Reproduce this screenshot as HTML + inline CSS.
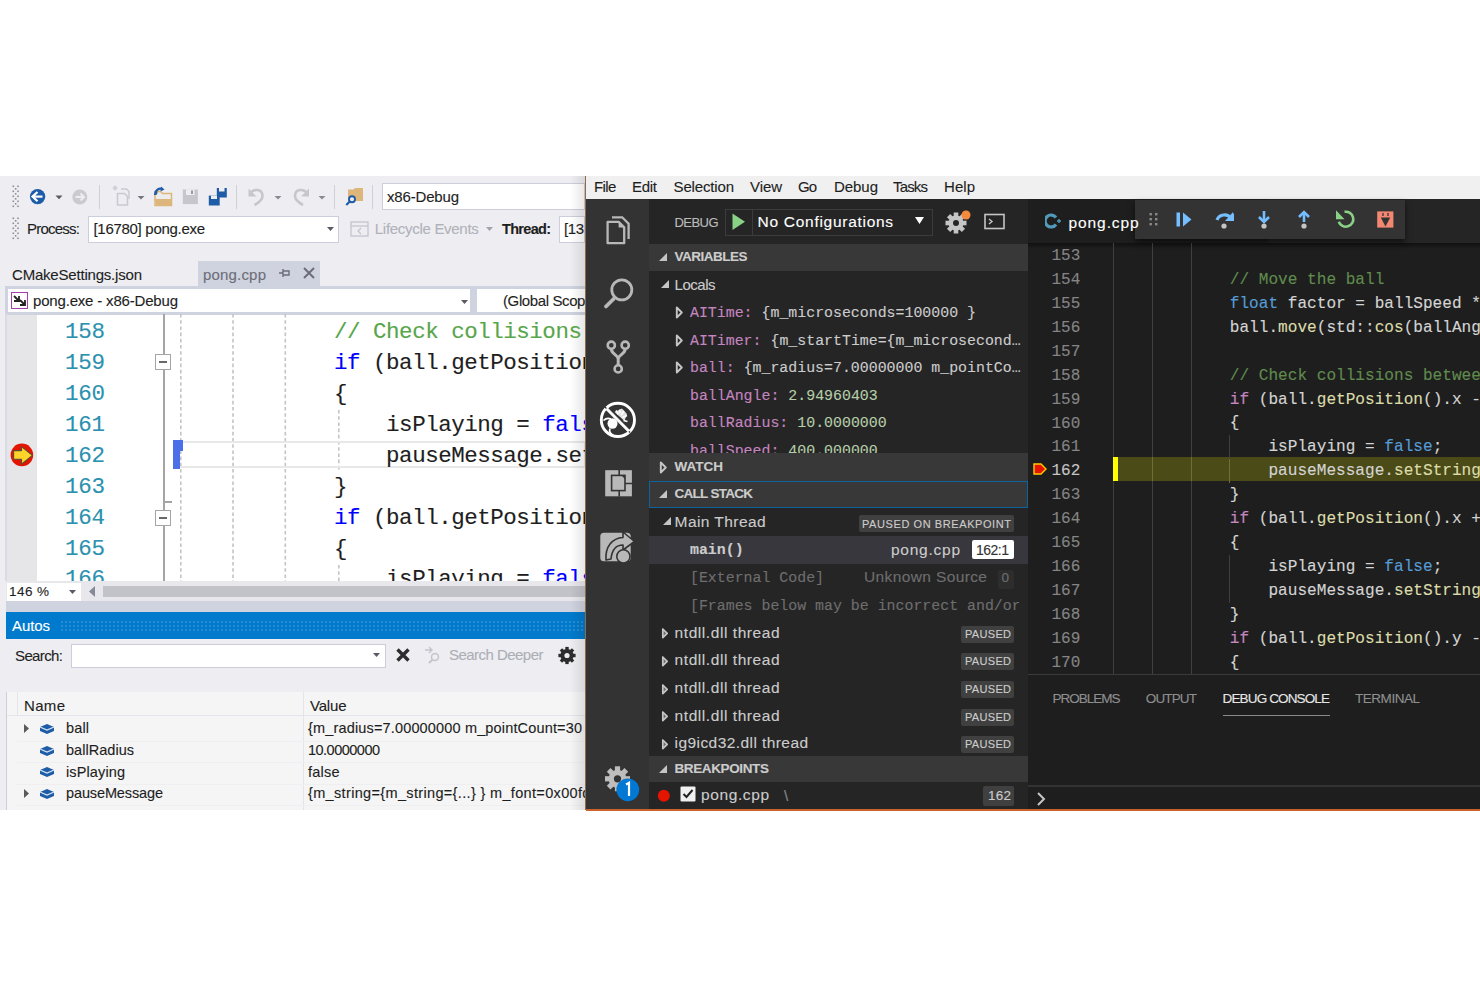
<!DOCTYPE html><html><head><meta charset="utf-8"><style>
html,body{margin:0;padding:0;}body{width:1480px;height:987px;position:relative;overflow:hidden;background:#fff;}
.t{position:absolute;white-space:pre;-webkit-text-stroke:0.12px currentColor;}

</style></head><body>
<div style="position:absolute;left:0px;top:176px;width:586px;height:634px;background:#eeeef2;"></div>
<svg style="position:absolute;left:0px;top:0px;overflow:visible" width="1" height="1"><g fill="#8e8e98"><rect x="12.5" y="185.5" width="1.6" height="1.6"/><rect x="17.2" y="185.5" width="1.6" height="1.6"/><rect x="14.85" y="188.0" width="1.6" height="1.6"/><rect x="12.5" y="190.5" width="1.6" height="1.6"/><rect x="17.2" y="190.5" width="1.6" height="1.6"/><rect x="14.85" y="193.0" width="1.6" height="1.6"/><rect x="12.5" y="195.5" width="1.6" height="1.6"/><rect x="17.2" y="195.5" width="1.6" height="1.6"/><rect x="14.85" y="198.0" width="1.6" height="1.6"/><rect x="12.5" y="200.5" width="1.6" height="1.6"/><rect x="17.2" y="200.5" width="1.6" height="1.6"/><rect x="14.85" y="203.0" width="1.6" height="1.6"/><rect x="12.5" y="205.5" width="1.6" height="1.6"/><rect x="17.2" y="205.5" width="1.6" height="1.6"/></g></svg>
<svg style="position:absolute;left:0px;top:0px;overflow:visible" width="1" height="1"><g fill="#8e8e98"><rect x="12.5" y="217.5" width="1.6" height="1.6"/><rect x="17.2" y="217.5" width="1.6" height="1.6"/><rect x="14.85" y="220.0" width="1.6" height="1.6"/><rect x="12.5" y="222.5" width="1.6" height="1.6"/><rect x="17.2" y="222.5" width="1.6" height="1.6"/><rect x="14.85" y="225.0" width="1.6" height="1.6"/><rect x="12.5" y="227.5" width="1.6" height="1.6"/><rect x="17.2" y="227.5" width="1.6" height="1.6"/><rect x="14.85" y="230.0" width="1.6" height="1.6"/><rect x="12.5" y="232.5" width="1.6" height="1.6"/><rect x="17.2" y="232.5" width="1.6" height="1.6"/><rect x="14.85" y="235.0" width="1.6" height="1.6"/><rect x="12.5" y="237.5" width="1.6" height="1.6"/><rect x="17.2" y="237.5" width="1.6" height="1.6"/></g></svg>
<svg style="position:absolute;left:20px;top:180px" width="80" height="34" viewBox="20 180 80 34"><circle cx="37.6" cy="196.6" r="7.7" fill="#1f5ca8"/><path d="M33 196.6H42.5" stroke="#fff" stroke-width="2.2"/><path d="M37.5 192L32.5 196.6L37.5 201.2" stroke="#fff" stroke-width="2.2" fill="none"/><path d="M55.5 195.5H62.5L59 199.2Z" fill="#5a5a62"/><circle cx="79.8" cy="197" r="7.5" fill="#cacacf"/><path d="M75.5 197H84M80.5 193.5L84 197L80.5 200.5" stroke="#eeeef2" stroke-width="2" fill="none"/></svg>
<div style="position:absolute;left:99px;top:185px;width:1px;height:24px;background:#cfcfd8;"></div>
<svg style="position:absolute;left:100px;top:180px" width="140" height="34" viewBox="100 180 140 34"><path d="M117.5 193.5H124.5L127.5 196.5V205H117.5Z" fill="none" stroke="#c9c9d1" stroke-width="1.6"/><path d="M121 189H126.5L129 191.5V199" fill="none" stroke="#c9c9d1" stroke-width="1.4"/><path d="M113.5 186.5L116.5 189.5M116.5 186.5L113.5 189.5M115 185.5V190.5M112.5 188H117.5" stroke="#cfcfd6" stroke-width="1.1"/><path d="M137.5 196H144.5L141 199.5Z" fill="#76767e"/><path d="M155 191.5H160.5L162.5 193.5H171.5V205.5H155Z" fill="#ececec" stroke="#dcb67a" stroke-width="1.5"/><path d="M154.5 199H171.8V205.5H156.5Z" fill="#dcb67a"/><path d="M155.5 195C155 190 159 187.5 162.5 189" fill="none" stroke="#1f5ca8" stroke-width="2.2"/><path d="M161 186.5L164.5 189.5L160.5 191.5Z" fill="#1f5ca8"/><path d="M155 190.5L158 193L154 195.5Z" fill="#1f5ca8"/><path d="M182.8 189.5H197.9V204.1H182.8Z" fill="#c6c6cc"/><path d="M186 189.5H194.5V195H186Z" fill="#eeeef2"/><rect x="191" y="190.5" width="2" height="3.5" fill="#9a9aa2"/><path d="M216.8 188H226.8V197.5H216.8Z" fill="#1f5ca8"/><path d="M219 188H224.5V191.5H219Z" fill="#eeeef2"/><path d="M208.8 195.6H219.7V205.5H208.8Z" fill="#1f5ca8"/><path d="M211 195.6H217V199H211Z" fill="#eeeef2"/></svg>
<div style="position:absolute;left:236px;top:185px;width:1px;height:24px;background:#cfcfd8;"></div>
<svg style="position:absolute;left:240px;top:180px" width="140" height="34" viewBox="240 180 140 34"><path d="M250 193.5C254 188 262.5 189 262.5 196C262.5 199.5 259 202.5 254.5 205" fill="none" stroke="#c6c6cc" stroke-width="2.6"/><path d="M248.5 188.5V196.5H256.5Z" fill="#c6c6cc"/><path d="M274.5 196H281.5L278 199.5Z" fill="#8a8a92"/><path d="M307.5 193.5C303.5 188 295 189 295 196C295 199.5 298.5 202.5 303 205" fill="none" stroke="#c6c6cc" stroke-width="2.6"/><path d="M309 188.5V196.5H301Z" fill="#c6c6cc"/><path d="M318.5 196H325.5L322 199.5Z" fill="#8a8a92"/><path d="M348 189.5H353.5L355 188H363V201H348Z" fill="#dcb67a"/><circle cx="352" cy="199.2" r="3" fill="#eeeef2" stroke="#1f5ca8" stroke-width="1.9"/><path d="M349.8 201.5L346.3 205" stroke="#1f5ca8" stroke-width="2.2"/></svg>
<div style="position:absolute;left:334px;top:185px;width:1px;height:24px;background:#cfcfd8;"></div>
<div style="position:absolute;left:372px;top:185px;width:1px;height:24px;background:#cfcfd8;"></div>
<div style="position:absolute;left:382px;top:183px;width:203px;height:27px;background:#ffffff;box-shadow:inset 0 0 0 1px #cccedb;"></div>
<div style="position:absolute;left:88px;top:216px;width:251px;height:27px;background:#ffffff;box-shadow:inset 0 0 0 1px #cccedb;"></div>
<svg style="position:absolute;left:327px;top:227px" width="8" height="5"><path d="M0 0h7l-3.5 4z" fill="#5a5a66"/></svg>
<svg style="position:absolute;left:350px;top:220px" width="20" height="18"><rect x="1" y="2" width="17" height="14" fill="none" stroke="#c4c4cc" stroke-width="1.3"/><path d="M1 6h17" stroke="#c4c4cc" stroke-width="1.3"/><path d="M11 8l-3 3 3 3" stroke="#c4c4cc" stroke-width="1.3" fill="none"/></svg>
<svg style="position:absolute;left:486px;top:227px" width="8" height="5"><path d="M0 0h7l-3.5 4z" fill="#a2a4ad"/></svg>
<div style="position:absolute;left:559px;top:216px;width:26px;height:27px;background:#ffffff;box-shadow:inset 0 0 0 1px #cccedb;"></div>
<div style="position:absolute;left:198px;top:261px;width:92px;height:25px;background:#cfd3df;"></div>
<div style="position:absolute;left:290px;top:261px;width:30px;height:25px;background:#cfd3df;"></div>
<svg style="position:absolute;left:278px;top:267px" width="14" height="12"><path d="M1 6h4M5 2v8M5 4h6v4H5" fill="none" stroke="#6d6d78" stroke-width="1.4"/></svg>
<svg style="position:absolute;left:302px;top:266px" width="14" height="14"><path d="M2 2l10 10M12 2L2 12" stroke="#6d6d78" stroke-width="2"/></svg>
<div style="position:absolute;left:5px;top:285.5px;width:581px;height:30px;background:#cfd3df;"></div>
<div style="position:absolute;left:5px;top:314px;width:1.6px;height:267px;background:#d9dce6;"></div>
<div style="position:absolute;left:7.5px;top:288.6px;width:462.4px;height:23.8px;background:#ffffff;"></div>
<div style="position:absolute;left:476.5px;top:288.6px;width:110px;height:23.8px;background:#ffffff;"></div>
<svg style="position:absolute;left:11px;top:292px" width="18" height="18"><rect x="0.5" y="0.5" width="16" height="16" fill="#fff" stroke="#a43fb1" stroke-width="1"/><path d="M3 4l5 5M8 4v5H3M9 8l5 5M14 8v5H9" stroke="#222" stroke-width="1.8" fill="none"/></svg>
<svg style="position:absolute;left:460.5px;top:299.5px" width="8" height="5"><path d="M0 0h7l-3.5 4z" fill="#5a5a66"/></svg>
<div style="position:absolute;left:7px;top:315px;width:579px;height:266px;background:#ffffff;"></div>
<div style="position:absolute;left:7px;top:315px;width:30px;height:266px;background:#e6e6e8;"></div>
<div style="position:absolute;left:162.8px;top:314px;width:2px;height:267px;background:#a5a5a5;"></div>
<svg style="position:absolute;left:155px;top:354px" width="17" height="17"><rect x="0.5" y="0.5" width="15" height="15" fill="#fff" stroke="#a5a5a5"/><path d="M4 8h8" stroke="#444" stroke-width="1.6"/></svg>
<svg style="position:absolute;left:155px;top:510px" width="17" height="17"><rect x="0.5" y="0.5" width="15" height="15" fill="#fff" stroke="#a5a5a5"/><path d="M4 8h8" stroke="#444" stroke-width="1.6"/></svg>
<div style="position:absolute;left:164px;top:501px;width:8px;height:1.5px;background:#a5a5a5;"></div>
<svg style="position:absolute;left:0;top:0;overflow:visible" width="1" height="1"><path d="M180.8 314V581" stroke="#c4c4c4" stroke-width="1.6" stroke-dasharray="3.6 2.6"/><path d="M233 314V581" stroke="#c4c4c4" stroke-width="1.6" stroke-dasharray="3.6 2.6"/><path d="M285.3 314V581" stroke="#c4c4c4" stroke-width="1.6" stroke-dasharray="3.6 2.6"/><path d="M338.8 410V470M338.8 565V581" stroke="#c4c4c4" stroke-width="1.6" stroke-dasharray="3.6 2.6"/></svg>
<div style="position:absolute;left:178px;top:441px;width:408px;height:27px;background:transparent;box-shadow:inset 0 0 0 2px #e8e8e8;"></div>
<div style="position:absolute;left:173px;top:440px;width:6.5px;height:28.5px;background:#4a6fe8;"></div>
<div style="position:absolute;left:173px;top:440px;width:9.5px;height:11px;background:#4a6fe8;"></div>
<svg style="position:absolute;left:0;top:0;overflow:visible" width="1" height="1"><circle cx="21.9" cy="454.9" r="11.3" fill="#e51400"/><path d="M13.6 450.6H21.5V446.6L32.4 455.4L21.5 464.2V459.2H13.6Z" fill="#ffd42a" stroke="#5a4a3a" stroke-width="1.1" stroke-linejoin="round"/></svg>
<div style="position:absolute;left:6px;top:581px;width:580px;height:20px;background:#e8e8ec;"></div>
<div style="position:absolute;left:7px;top:583px;width:74px;height:18px;background:#ffffff;"></div>
<svg style="position:absolute;left:69px;top:590px" width="8" height="5"><path d="M0 0h7l-3.5 4z" fill="#5a5a66"/></svg>
<svg style="position:absolute;left:89px;top:586px" width="8" height="12"><path d="M6 0v11L0 5.5z" fill="#868999"/></svg>
<div style="position:absolute;left:103px;top:586px;width:483px;height:11px;background:#c2c3c9;"></div>
<div style="position:absolute;left:6px;top:601px;width:580px;height:11px;background:#cfd3df;"></div>
<div style="position:absolute;left:6px;top:612px;width:580px;height:27px;background:#007acc;"></div>
<div style="position:absolute;left:60px;top:620px;width:526px;height:11px;background-image:radial-gradient(circle,#2b8ad2 0.9px,transparent 1.1px);background-size:4px 4px;"></div>
<div style="position:absolute;left:6px;top:639px;width:580px;height:171px;background:#eeeef2;"></div>
<div style="position:absolute;left:71px;top:644px;width:315px;height:24px;background:#ffffff;box-shadow:inset 0 0 0 1px #cccedb;"></div>
<svg style="position:absolute;left:373px;top:653px" width="8" height="5"><path d="M0 0h7l-3.5 4z" fill="#5a5a66"/></svg>
<svg style="position:absolute;left:395px;top:647px" width="17" height="17"><path d="M2.5 2.5l11 11M13.5 2.5l-11 11" stroke="#2d2d30" stroke-width="3.4"/></svg>
<svg style="position:absolute;left:423px;top:645px" width="18" height="20"><path d="M2 5h7M6 2l3 3-3 3" stroke="#c4c4cc" stroke-width="1.4" fill="none"/><circle cx="12" cy="12" r="3.5" fill="none" stroke="#c4c4cc" stroke-width="1.5"/><path d="M9.5 14.5L6 18" stroke="#c4c4cc" stroke-width="1.8"/></svg>
<svg style="position:absolute;left:557px;top:646px" width="20" height="20"><g transform="translate(10 9.5)"><circle r="6.6" fill="#2d2d30"/><rect x="-1.7" y="-8.6" width="3.4" height="4" fill="#2d2d30" transform="rotate(0)"/><rect x="-1.7" y="-8.6" width="3.4" height="4" fill="#2d2d30" transform="rotate(45)"/><rect x="-1.7" y="-8.6" width="3.4" height="4" fill="#2d2d30" transform="rotate(90)"/><rect x="-1.7" y="-8.6" width="3.4" height="4" fill="#2d2d30" transform="rotate(135)"/><rect x="-1.7" y="-8.6" width="3.4" height="4" fill="#2d2d30" transform="rotate(180)"/><rect x="-1.7" y="-8.6" width="3.4" height="4" fill="#2d2d30" transform="rotate(225)"/><rect x="-1.7" y="-8.6" width="3.4" height="4" fill="#2d2d30" transform="rotate(270)"/><rect x="-1.7" y="-8.6" width="3.4" height="4" fill="#2d2d30" transform="rotate(315)"/><circle r="2.6" fill="#eeeef2"/></g></svg>
<div style="position:absolute;left:6px;top:692px;width:580px;height:118px;background:#f5f5f5;"></div>
<div style="position:absolute;left:6px;top:692px;width:580px;height:24px;background:#f5f5f5;border-bottom:1.5px solid #e4e4ea;box-sizing:border-box;"></div>
<div style="position:absolute;left:6px;top:692px;width:1px;height:118px;background:#cccedb;"></div>
<div style="position:absolute;left:17px;top:692px;width:1px;height:24px;background:#e4e4ea;"></div>
<div style="position:absolute;left:303px;top:692px;width:1px;height:118px;background:#e4e4ea;"></div>
<div style="position:absolute;left:17px;top:740.7px;width:569px;height:1px;background:#efeff2;"></div>
<svg style="position:absolute;left:23px;top:723.2px" width="8" height="12"><path d="M1 1v9l5-4.5z" fill="#5a5a5a"/></svg>
<svg style="position:absolute;left:39px;top:722.2px" width="16" height="14"><path d="M1 5l7-3 7 3v4l-7 3-7-3z" fill="#1f5ca8"/><path d="M1 5l7 3 7-3" stroke="#d8e6f5" stroke-width="1.2" fill="none"/></svg>
<div style="position:absolute;left:17px;top:762.3000000000001px;width:569px;height:1px;background:#efeff2;"></div>
<svg style="position:absolute;left:39px;top:743.8000000000001px" width="16" height="14"><path d="M1 5l7-3 7 3v4l-7 3-7-3z" fill="#1f5ca8"/><path d="M1 5l7 3 7-3" stroke="#d8e6f5" stroke-width="1.2" fill="none"/></svg>
<div style="position:absolute;left:17px;top:783.9000000000001px;width:569px;height:1px;background:#efeff2;"></div>
<svg style="position:absolute;left:39px;top:765.4000000000001px" width="16" height="14"><path d="M1 5l7-3 7 3v4l-7 3-7-3z" fill="#1f5ca8"/><path d="M1 5l7 3 7-3" stroke="#d8e6f5" stroke-width="1.2" fill="none"/></svg>
<svg style="position:absolute;left:23px;top:788.0px" width="8" height="12"><path d="M1 1v9l5-4.5z" fill="#5a5a5a"/></svg>
<svg style="position:absolute;left:39px;top:787.0px" width="16" height="14"><path d="M1 5l7-3 7 3v4l-7 3-7-3z" fill="#1f5ca8"/><path d="M1 5l7 3 7-3" stroke="#d8e6f5" stroke-width="1.2" fill="none"/></svg>
<div style="position:absolute;left:17px;top:805px;width:569px;height:1px;background:#efeff2;"></div>
<div style="position:absolute;left:570px;top:176px;width:16px;height:634px;background:linear-gradient(to right,rgba(0,0,0,0),rgba(0,0,0,0.10));"></div>
<div style="position:absolute;left:584.6px;top:176px;width:2px;height:634px;background:#8b6d4c;"></div>
<div style="position:absolute;left:586px;top:176px;width:894px;height:634px;background:#1e1e1e;"></div>
<div style="position:absolute;left:586px;top:176px;width:894px;height:23px;background:#f0f0f0;"></div>
<div style="position:absolute;left:586px;top:199px;width:63px;height:611px;background:#333333;"></div>
<svg style="position:absolute;left:586px;top:199px" width="63" height="400" viewBox="586 199 63 400"><path d="M607.6 221.8H618.6L624.2 227.4V243.2H607.6Z" fill="none" stroke="#b8b8b8" stroke-width="2.3" stroke-linejoin="round"/><path d="M618.6 221.8V227.4H624.2Z" fill="#b8b8b8"/><path d="M612 217.3H622.2L628.6 223.7V239" fill="none" stroke="#b8b8b8" stroke-width="2.3"/><circle cx="621.8" cy="289.9" r="10" fill="none" stroke="#b8b8b8" stroke-width="2.8"/><path d="M606 306.5L613.5 299" stroke="#b8b8b8" stroke-width="3.8" stroke-linecap="round"/><circle cx="611.3" cy="345.2" r="3.6" fill="none" stroke="#b8b8b8" stroke-width="2.6"/><circle cx="625.2" cy="345.2" r="3.6" fill="none" stroke="#b8b8b8" stroke-width="2.6"/><circle cx="618.2" cy="368.9" r="3.6" fill="none" stroke="#b8b8b8" stroke-width="2.6"/><path d="M611.3 349C611.3 354 618.2 355 618.2 359V365.2M625.2 349C625.2 354 618.2 355 618.2 359" fill="none" stroke="#b8b8b8" stroke-width="3"/><circle cx="617.9" cy="419.9" r="16.6" fill="none" stroke="#ffffff" stroke-width="2.9"/><path d="M606 408L629.5 431.8" stroke="#ffffff" stroke-width="2.8"/><ellipse cx="612.5" cy="423.5" rx="5" ry="5.2" fill="#ffffff"/><path d="M603.5 420.5C606 418 609 418 611 419M610 428.5C609 431 610 433 612 434.5M620 409.5V413M616 410.5L618.5 414.5M624 411L621 415M627 415.5L622.5 417.5M627.5 421.5L623.5 420.5" stroke="#ffffff" stroke-width="1.7" fill="none"/><path d="M614.5 412L622 408.5L627 414L624.5 421Z" fill="#ffffff" opacity="0.85"/><path d="M605 407L630 432.5" stroke="#333333" stroke-width="1.2"/><path d="M606.4 408.4L629 431.2" stroke="#ffffff" stroke-width="2.2"/><rect x="605.2" y="470.2" width="26.7" height="26.1" fill="#b8b8b8"/><path d="M619.2 470V496.5M619.2 483.5H632" stroke="#333333" stroke-width="1.6"/><rect x="611.6" y="475.4" width="13.4" height="15.2" fill="#b8b8b8" stroke="#333333" stroke-width="1.6"/><path d="M621.5 475.4H625V479Z" fill="#333333"/><rect x="600.3" y="532.7" width="30.4" height="28.6" rx="3.5" fill="#b8b8b8"/><path d="M606 560C605 547 612 538 623 537.5V532L634.5 541.5L623 550V545C617 545 612 549 611 559Z" fill="#b8b8b8" stroke="#333333" stroke-width="1.6" stroke-linejoin="round"/><circle cx="623.4" cy="556.4" r="6.6" fill="#b8b8b8" stroke="#333333" stroke-width="1.6"/></svg>
<svg style="position:absolute;left:603px;top:764px" width="38" height="38"><g transform="translate(14.5 14.8)"><circle r="9" fill="#bdbdbd"/><rect x="-2.6" y="-12.5" width="5.2" height="6" fill="#bdbdbd" transform="rotate(0)"/><rect x="-2.6" y="-12.5" width="5.2" height="6" fill="#bdbdbd" transform="rotate(45)"/><rect x="-2.6" y="-12.5" width="5.2" height="6" fill="#bdbdbd" transform="rotate(90)"/><rect x="-2.6" y="-12.5" width="5.2" height="6" fill="#bdbdbd" transform="rotate(135)"/><rect x="-2.6" y="-12.5" width="5.2" height="6" fill="#bdbdbd" transform="rotate(180)"/><rect x="-2.6" y="-12.5" width="5.2" height="6" fill="#bdbdbd" transform="rotate(225)"/><rect x="-2.6" y="-12.5" width="5.2" height="6" fill="#bdbdbd" transform="rotate(270)"/><rect x="-2.6" y="-12.5" width="5.2" height="6" fill="#bdbdbd" transform="rotate(315)"/><circle r="3.6" fill="#333"/></g><circle cx="24.8" cy="25.8" r="11.4" fill="#0078d4"/><path d="M23 20.5l3-1.6v13" stroke="#fff" stroke-width="2.2" fill="none"/></svg>
<div style="position:absolute;left:649px;top:199px;width:379px;height:611px;background:#252526;"></div>
<div style="position:absolute;left:725px;top:208.5px;width:208px;height:27px;background:#252526;box-shadow:inset 0 0 0 1px #3c3c3c;"></div>
<div style="position:absolute;left:752px;top:209px;width:1px;height:26px;background:#3c3c3c;"></div>
<svg style="position:absolute;left:732px;top:213px" width="14" height="18"><path d="M0.5 0.5v16.5l12.5-8.25z" fill="#89d185"/></svg>
<svg style="position:absolute;left:914px;top:216px" width="12" height="10"><path d="M1 1h9l-4.5 7z" fill="#ffffff"/></svg>
<svg style="position:absolute;left:942px;top:208px" width="32" height="28"><g transform="translate(14 15)"><circle r="7.5" fill="#c5c5c5"/><rect x="-2.3" y="-10.5" width="4.6" height="5" fill="#c5c5c5" transform="rotate(0)"/><rect x="-2.3" y="-10.5" width="4.6" height="5" fill="#c5c5c5" transform="rotate(45)"/><rect x="-2.3" y="-10.5" width="4.6" height="5" fill="#c5c5c5" transform="rotate(90)"/><rect x="-2.3" y="-10.5" width="4.6" height="5" fill="#c5c5c5" transform="rotate(135)"/><rect x="-2.3" y="-10.5" width="4.6" height="5" fill="#c5c5c5" transform="rotate(180)"/><rect x="-2.3" y="-10.5" width="4.6" height="5" fill="#c5c5c5" transform="rotate(225)"/><rect x="-2.3" y="-10.5" width="4.6" height="5" fill="#c5c5c5" transform="rotate(270)"/><rect x="-2.3" y="-10.5" width="4.6" height="5" fill="#c5c5c5" transform="rotate(315)"/><circle r="3" fill="#252526"/></g><circle cx="24" cy="7" r="4.5" fill="#f48a3c"/></svg>
<svg style="position:absolute;left:984px;top:213px" width="22" height="18"><rect x="1" y="1.5" width="19" height="14" fill="none" stroke="#c5c5c5" stroke-width="1.6"/><path d="M5 6l3 2.5-3 2.5" fill="none" stroke="#c5c5c5" stroke-width="1.4"/></svg>
<div style="position:absolute;left:649px;top:243.5px;width:379px;height:27.5px;background:#383838;"></div>
<svg style="position:absolute;left:657px;top:252.25px" width="12" height="12"><path d="M10 1v8H2z" fill="#c5c5c5"/></svg>
<svg style="position:absolute;left:659px;top:279px" width="12" height="12"><path d="M10 1v8H2z" fill="#c5c5c5"/></svg>
<svg style="position:absolute;left:675px;top:306.0px" width="10" height="13"><path d="M1.8 1.5v10l5-5z" fill="none" stroke="#c5c5c5" stroke-width="1.9" stroke-linejoin="round"/></svg>
<svg style="position:absolute;left:675px;top:333.6px" width="10" height="13"><path d="M1.8 1.5v10l5-5z" fill="none" stroke="#c5c5c5" stroke-width="1.9" stroke-linejoin="round"/></svg>
<svg style="position:absolute;left:675px;top:361.2px" width="10" height="13"><path d="M1.8 1.5v10l5-5z" fill="none" stroke="#c5c5c5" stroke-width="1.9" stroke-linejoin="round"/></svg>
<div style="position:absolute;left:649px;top:453px;width:379px;height:27.5px;background:#383838;"></div>
<svg style="position:absolute;left:659px;top:460.75px" width="10" height="13"><path d="M1.8 1.5v10l5-5z" fill="none" stroke="#c5c5c5" stroke-width="1.9" stroke-linejoin="round"/></svg>
<div style="position:absolute;left:649px;top:480.5px;width:379px;height:27.5px;background:#383838;box-shadow:inset 0 0 0 1px #0e639c;"></div>
<svg style="position:absolute;left:657px;top:489.25px" width="12" height="12"><path d="M10 1v8H2z" fill="#c5c5c5"/></svg>
<svg style="position:absolute;left:661px;top:516px" width="12" height="12"><path d="M10 1v8H2z" fill="#c5c5c5"/></svg>
<div style="position:absolute;left:859px;top:515px;width:155px;height:16.5px;background:#404040;border-radius:2px;"></div>
<div style="position:absolute;left:649px;top:536px;width:379px;height:27.5px;background:#37373d;"></div>
<div style="position:absolute;left:972px;top:540px;width:42px;height:19px;background:#ffffff;border-radius:2px;"></div>
<div style="position:absolute;left:998px;top:570px;width:16px;height:19px;background:#2d2d2d;border-radius:2px;"></div>
<svg style="position:absolute;left:660.5px;top:627.3px" width="10" height="13"><path d="M1.8 2v8.6l4.4-4.3z" fill="#6a6a6a" stroke="#c5c5c5" stroke-width="1.7" stroke-linejoin="round"/></svg>
<div style="position:absolute;left:961px;top:625.8px;width:53px;height:17px;background:#404040;border-radius:2px;"></div>
<svg style="position:absolute;left:660.5px;top:654.9px" width="10" height="13"><path d="M1.8 2v8.6l4.4-4.3z" fill="#6a6a6a" stroke="#c5c5c5" stroke-width="1.7" stroke-linejoin="round"/></svg>
<div style="position:absolute;left:961px;top:653.4px;width:53px;height:17px;background:#404040;border-radius:2px;"></div>
<svg style="position:absolute;left:660.5px;top:682.5px" width="10" height="13"><path d="M1.8 2v8.6l4.4-4.3z" fill="#6a6a6a" stroke="#c5c5c5" stroke-width="1.7" stroke-linejoin="round"/></svg>
<div style="position:absolute;left:961px;top:681.0px;width:53px;height:17px;background:#404040;border-radius:2px;"></div>
<svg style="position:absolute;left:660.5px;top:710.0999999999999px" width="10" height="13"><path d="M1.8 2v8.6l4.4-4.3z" fill="#6a6a6a" stroke="#c5c5c5" stroke-width="1.7" stroke-linejoin="round"/></svg>
<div style="position:absolute;left:961px;top:708.5999999999999px;width:53px;height:17px;background:#404040;border-radius:2px;"></div>
<svg style="position:absolute;left:660.5px;top:737.6999999999999px" width="10" height="13"><path d="M1.8 2v8.6l4.4-4.3z" fill="#6a6a6a" stroke="#c5c5c5" stroke-width="1.7" stroke-linejoin="round"/></svg>
<div style="position:absolute;left:961px;top:736.1999999999999px;width:53px;height:17px;background:#404040;border-radius:2px;"></div>
<div style="position:absolute;left:649px;top:755.5px;width:379px;height:26px;background:#383838;"></div>
<svg style="position:absolute;left:657px;top:763.5px" width="12" height="12"><path d="M10 1v8H2z" fill="#c5c5c5"/></svg>
<svg style="position:absolute;left:657px;top:789px" width="14" height="14"><circle cx="6.8" cy="6.8" r="6" fill="#e51400"/></svg>
<svg style="position:absolute;left:680px;top:786px" width="17" height="17"><rect x="0.5" y="0.5" width="15" height="15" fill="#f0f0f0" rx="1"/><path d="M3.5 8l3 3 6-7" stroke="#222" stroke-width="2" fill="none"/></svg>
<div style="position:absolute;left:983px;top:786px;width:31px;height:19.5px;background:#404040;border-radius:2px;"></div>
<div style="position:absolute;left:1028px;top:199px;width:452px;height:44px;background:#252526;"></div>
<div style="position:absolute;left:1028px;top:199px;width:240px;height:44px;background:#1e1e1e;"></div>
<svg style="position:absolute;left:1045px;top:213px" width="18" height="16"><path d="M11 4.5A6 6 0 1 0 11 11.5" fill="none" stroke="#519aba" stroke-width="3.2"/><path d="M12 8h4M14 6v4" stroke="#519aba" stroke-width="1.4"/></svg>
<div style="position:absolute;left:1028px;top:243px;width:452px;height:431px;background:#1e1e1e;"></div>
<div style="position:absolute;left:1028px;top:243px;width:452px;height:6px;background:linear-gradient(rgba(0,0,0,0.45),rgba(0,0,0,0));"></div>
<div style="position:absolute;left:1113.0px;top:243px;width:1px;height:431px;background:#404040;"></div>
<div style="position:absolute;left:1152.3px;top:243px;width:1px;height:431px;background:#404040;"></div>
<div style="position:absolute;left:1191.2px;top:243px;width:1px;height:431px;background:#404040;"></div>
<div style="position:absolute;left:1113.5px;top:456.8px;width:367px;height:24.4px;background:#4b4b18;"></div>
<div style="position:absolute;left:1113px;top:456.8px;width:5px;height:24.4px;background:#ffff00;"></div>
<div style="position:absolute;left:1152.3px;top:456.8px;width:1px;height:24.4px;background:rgba(120,120,60,0.8);"></div>
<div style="position:absolute;left:1191.2px;top:456.8px;width:1px;height:24.4px;background:rgba(120,120,60,0.8);"></div>
<div style="position:absolute;left:1229.1px;top:456.8px;width:1px;height:24.4px;background:rgba(120,120,60,0.8);"></div>
<div style="position:absolute;left:1229.1px;top:435.32000000000005px;width:1px;height:23.94px;background:#404040;"></div>
<div style="position:absolute;left:1229.1px;top:459.26px;width:1px;height:23.94px;background:#6e6e3a;"></div>
<div style="position:absolute;left:1229.1px;top:555.02px;width:1px;height:23.94px;background:#404040;"></div>
<div style="position:absolute;left:1229.1px;top:578.96px;width:1px;height:23.94px;background:#404040;"></div>
<svg style="position:absolute;left:1033px;top:463px" width="14" height="12"><path d="M1 1h7l5 5-5 5H1z" fill="#e51400" stroke="#ffcc00" stroke-width="1.4"/></svg>
<div style="position:absolute;left:1135px;top:200px;width:270px;height:39px;background:#333333;box-shadow:0 3px 6px rgba(0,0,0,0.6);"></div>
<svg style="position:absolute;left:1148px;top:211px" width="12" height="16"><g fill="#8a8a8a"><rect x="1.5" y="2" width="2.4" height="2.4"/><rect x="1.5" y="7" width="2.4" height="2.4"/><rect x="1.5" y="12" width="2.4" height="2.4"/><rect x="7" y="2" width="2.4" height="2.4"/><rect x="7" y="7" width="2.4" height="2.4"/><rect x="7" y="12" width="2.4" height="2.4"/></g></svg>
<svg style="position:absolute;left:1174px;top:211px" width="20" height="18"><rect x="2.5" y="1.5" width="3.5" height="14" fill="#75beff"/><path d="M9 1.5v14l8.5-7z" fill="#75beff"/></svg>
<svg style="position:absolute;left:1213px;top:208px" width="24" height="22"><path d="M4 12c2-6 11-7 14-1" fill="none" stroke="#75beff" stroke-width="3.2"/><path d="M20 4v9h-8" fill="#75beff"/><path d="M13 13h8V5z" fill="#75beff"/><circle cx="11" cy="18" r="2.6" fill="#c5c5c5"/></svg>
<svg style="position:absolute;left:1254px;top:208px" width="20" height="22"><path d="M10 3v9" stroke="#75beff" stroke-width="2.6"/><path d="M5 9l5 5 5-5" fill="none" stroke="#75beff" stroke-width="2.6"/><circle cx="10" cy="18" r="2.6" fill="#c5c5c5"/></svg>
<svg style="position:absolute;left:1294px;top:208px" width="20" height="22"><path d="M10 4v10" stroke="#75beff" stroke-width="2.6"/><path d="M5 9l5-5 5 5" fill="none" stroke="#75beff" stroke-width="2.6"/><circle cx="10" cy="18" r="2.6" fill="#c5c5c5"/></svg>
<svg style="position:absolute;left:1325px;top:200px" width="80" height="40" viewBox="1325 200 80 40"><path d="M1344.5 211.8A7.5 7.5 0 1 1 1338.75 221.8" fill="none" stroke="#89d185" stroke-width="2.6"/><path d="M1336 210.3V219.2H1344.5Z" fill="#89d185"/><rect x="1377.2" y="211.4" width="16.2" height="16.2" fill="#f48771"/><path d="M1383 213v3M1388 213v3" stroke="#333" stroke-width="1.3"/><path d="M1380.8 217.5H1390.2L1385.5 226.5Z" fill="#333"/></svg>
<div style="position:absolute;left:1028px;top:674px;width:452px;height:136px;background:#1e1e1e;"></div>
<div style="position:absolute;left:1028px;top:674px;width:452px;height:1px;background:#3a3a3a;"></div>
<div style="position:absolute;left:1222.6px;top:714.5px;width:107.5px;height:1.5px;background:#8a8a8a;"></div>
<div style="position:absolute;left:1028px;top:785px;width:452px;height:1.5px;background:#333333;"></div>
<svg style="position:absolute;left:1036px;top:791px" width="12" height="16"><path d="M2 2l6 6-6 6" fill="none" stroke="#c5c5c5" stroke-width="2"/></svg>
<div style="position:absolute;left:586px;top:809px;width:894px;height:1.5px;background:#c8632e;"></div>
<div style="position:absolute;left:0;top:0;width:1480px;height:987px;clip-path:inset(176px 895px 177px 0px);">
<div class="t" id="t0" style="left:387px;top:187.80px;font-family:'Liberation Sans', sans-serif;font-size:15px;line-height:18.0px;color:#1e1e1e;letter-spacing:-0.174px;">x86-Debug</div>
<div class="t" id="t1" style="left:27px;top:220.30px;font-family:'Liberation Sans', sans-serif;font-size:15px;line-height:18.0px;color:#1e1e1e;letter-spacing:-0.766px;">Process:</div>
<div class="t" id="t2" style="left:93.5px;top:220.30px;font-family:'Liberation Sans', sans-serif;font-size:15px;line-height:18.0px;color:#1e1e1e;letter-spacing:-0.296px;">[16780] pong.exe</div>
<div class="t" id="t3" style="left:374.8px;top:220.30px;font-family:'Liberation Sans', sans-serif;font-size:15px;line-height:18.0px;color:#b0b2ba;letter-spacing:-0.293px;">Lifecycle Events</div>
<div class="t" id="t4" style="left:502px;top:220.77px;font-family:'Liberation Sans', sans-serif;font-size:14.5px;line-height:17.4px;color:#1e1e1e;font-weight:bold;letter-spacing:-0.695px;">Thread:</div>
<div class="t" id="t5" style="left:564px;top:220.30px;font-family:'Liberation Sans', sans-serif;font-size:15px;line-height:18.0px;color:#1e1e1e;letter-spacing:-0.430px;">[13</div>
<div class="t" id="t6" style="left:12px;top:266.30px;font-family:'Liberation Sans', sans-serif;font-size:15px;line-height:18.0px;color:#1e1e1e;letter-spacing:-0.200px;">CMakeSettings.json</div>
<div class="t" id="t7" style="left:203px;top:266.30px;font-family:'Liberation Sans', sans-serif;font-size:15px;line-height:18.0px;color:#6d6d78;letter-spacing:0.181px;">pong.cpp</div>
<div class="t" id="t8" style="left:33px;top:291.60px;font-family:'Liberation Sans', sans-serif;font-size:15px;line-height:18.0px;color:#1e1e1e;letter-spacing:-0.181px;">pong.exe - x86-Debug</div>
<div class="t" id="t9" style="left:503px;top:291.60px;font-family:'Liberation Sans', sans-serif;font-size:15px;line-height:18.0px;color:#1e1e1e;letter-spacing:-0.389px;">(Global Scope)</div>
<div class="t" id="t34" style="left:9px;top:583.52px;font-family:'Liberation Sans', sans-serif;font-size:13.5px;line-height:16.2px;color:#1e1e1e;letter-spacing:0.430px;">146 %</div>
<div class="t" id="t35" style="left:12px;top:616.50px;font-family:'Liberation Sans', sans-serif;font-size:15px;line-height:18.0px;color:#ffffff;letter-spacing:-0.090px;">Autos</div>
<div class="t" id="t36" style="left:15px;top:646.80px;font-family:'Liberation Sans', sans-serif;font-size:15px;line-height:18.0px;color:#1e1e1e;letter-spacing:-0.617px;">Search:</div>
<div class="t" id="t37" style="left:449px;top:646.30px;font-family:'Liberation Sans', sans-serif;font-size:15px;line-height:18.0px;color:#acaeb6;letter-spacing:-0.534px;">Search Deeper</div>
<div class="t" id="t38" style="left:24px;top:696.70px;font-family:'Liberation Sans', sans-serif;font-size:15px;line-height:18.0px;color:#1e1e1e;letter-spacing:0.328px;">Name</div>
<div class="t" id="t39" style="left:310px;top:696.70px;font-family:'Liberation Sans', sans-serif;font-size:15px;line-height:18.0px;color:#1e1e1e;letter-spacing:-0.191px;">Value</div>
<div class="t" id="t40" style="left:66px;top:720.47px;font-family:'Liberation Sans', sans-serif;font-size:14.5px;line-height:17.4px;color:#1e1e1e;letter-spacing:0.141px;">ball</div>
<div class="t" id="t42" style="left:66px;top:742.07px;font-family:'Liberation Sans', sans-serif;font-size:14.5px;line-height:17.4px;color:#1e1e1e;letter-spacing:0.031px;">ballRadius</div>
<div class="t" id="t44" style="left:66px;top:763.67px;font-family:'Liberation Sans', sans-serif;font-size:14.5px;line-height:17.4px;color:#1e1e1e;letter-spacing:0.121px;">isPlaying</div>
<div class="t" id="t46" style="left:66px;top:785.27px;font-family:'Liberation Sans', sans-serif;font-size:14.5px;line-height:17.4px;color:#1e1e1e;letter-spacing:-0.122px;">pauseMessage</div>
</div>
<div style="position:absolute;left:0;top:0;width:1480px;height:987px;clip-path:inset(314px 895px 406px 6px);">
<div class="t" id="t10" style="left:65px;top:318.81px;font-family:'Liberation Mono', monospace;font-size:22.5px;line-height:27.0px;color:#2b91af;letter-spacing:-0.300px;">158</div>
<div class="t" id="t11" style="left:334px;top:318.81px;font-family:'Liberation Mono', monospace;font-size:22.5px;line-height:27.0px;color:#57a64a;letter-spacing:-0.480px;">// Check collisions between the ball and the screen</div>
<div class="t" id="t12" style="left:65px;top:349.77px;font-family:'Liberation Mono', monospace;font-size:22.5px;line-height:27.0px;color:#2b91af;letter-spacing:-0.300px;">159</div>
<div class="t" id="t13" style="left:334px;top:349.77px;font-family:'Liberation Mono', monospace;font-size:22.5px;line-height:27.0px;color:#0000ff;letter-spacing:-0.480px;">if</div>
<div class="t" id="t14" style="left:360.04px;top:349.77px;font-family:'Liberation Mono', monospace;font-size:22.5px;line-height:27.0px;color:#1e1e1e;letter-spacing:-0.480px;"> (ball.getPosition().x - ballRadius &lt; 0.f)</div>
<div class="t" id="t15" style="left:65px;top:380.73px;font-family:'Liberation Mono', monospace;font-size:22.5px;line-height:27.0px;color:#2b91af;letter-spacing:-0.300px;">160</div>
<div class="t" id="t16" style="left:334px;top:380.73px;font-family:'Liberation Mono', monospace;font-size:22.5px;line-height:27.0px;color:#1e1e1e;letter-spacing:-0.480px;">{</div>
<div class="t" id="t17" style="left:65px;top:411.69px;font-family:'Liberation Mono', monospace;font-size:22.5px;line-height:27.0px;color:#2b91af;letter-spacing:-0.300px;">161</div>
<div class="t" id="t18" style="left:334px;top:411.69px;font-family:'Liberation Mono', monospace;font-size:22.5px;line-height:27.0px;color:#1e1e1e;letter-spacing:-0.480px;">    isPlaying = </div>
<div class="t" id="t19" style="left:542.3199999999999px;top:411.69px;font-family:'Liberation Mono', monospace;font-size:22.5px;line-height:27.0px;color:#0000ff;letter-spacing:-0.480px;">false</div>
<div class="t" id="t20" style="left:607.42px;top:411.69px;font-family:'Liberation Mono', monospace;font-size:22.5px;line-height:27.0px;color:#1e1e1e;letter-spacing:-0.480px;">;</div>
<div class="t" id="t21" style="left:65px;top:442.65px;font-family:'Liberation Mono', monospace;font-size:22.5px;line-height:27.0px;color:#2b91af;letter-spacing:-0.300px;">162</div>
<div class="t" id="t22" style="left:334px;top:442.65px;font-family:'Liberation Mono', monospace;font-size:22.5px;line-height:27.0px;color:#1e1e1e;letter-spacing:-0.480px;">    pauseMessage.setString("You won!");</div>
<div class="t" id="t23" style="left:65px;top:473.61px;font-family:'Liberation Mono', monospace;font-size:22.5px;line-height:27.0px;color:#2b91af;letter-spacing:-0.300px;">163</div>
<div class="t" id="t24" style="left:334px;top:473.61px;font-family:'Liberation Mono', monospace;font-size:22.5px;line-height:27.0px;color:#1e1e1e;letter-spacing:-0.480px;">}</div>
<div class="t" id="t25" style="left:65px;top:504.57px;font-family:'Liberation Mono', monospace;font-size:22.5px;line-height:27.0px;color:#2b91af;letter-spacing:-0.300px;">164</div>
<div class="t" id="t26" style="left:334px;top:504.57px;font-family:'Liberation Mono', monospace;font-size:22.5px;line-height:27.0px;color:#0000ff;letter-spacing:-0.480px;">if</div>
<div class="t" id="t27" style="left:360.04px;top:504.57px;font-family:'Liberation Mono', monospace;font-size:22.5px;line-height:27.0px;color:#1e1e1e;letter-spacing:-0.480px;"> (ball.getPosition().x + ballRadius &gt; gameWidth)</div>
<div class="t" id="t28" style="left:65px;top:535.53px;font-family:'Liberation Mono', monospace;font-size:22.5px;line-height:27.0px;color:#2b91af;letter-spacing:-0.300px;">165</div>
<div class="t" id="t29" style="left:334px;top:535.53px;font-family:'Liberation Mono', monospace;font-size:22.5px;line-height:27.0px;color:#1e1e1e;letter-spacing:-0.480px;">{</div>
<div class="t" id="t30" style="left:65px;top:566.49px;font-family:'Liberation Mono', monospace;font-size:22.5px;line-height:27.0px;color:#2b91af;letter-spacing:-0.300px;">166</div>
<div class="t" id="t31" style="left:334px;top:566.49px;font-family:'Liberation Mono', monospace;font-size:22.5px;line-height:27.0px;color:#1e1e1e;letter-spacing:-0.480px;">    isPlaying = </div>
<div class="t" id="t32" style="left:542.3199999999999px;top:566.49px;font-family:'Liberation Mono', monospace;font-size:22.5px;line-height:27.0px;color:#0000ff;letter-spacing:-0.480px;">false</div>
<div class="t" id="t33" style="left:607.42px;top:566.49px;font-family:'Liberation Mono', monospace;font-size:22.5px;line-height:27.0px;color:#1e1e1e;letter-spacing:-0.480px;">;</div>
</div>
<div style="position:absolute;left:0;top:0;width:1480px;height:987px;clip-path:inset(692px 895px 177px 303px);">
<div class="t" id="t41" style="left:308px;top:720.47px;font-family:'Liberation Sans', sans-serif;font-size:14.5px;line-height:17.4px;color:#1e1e1e;letter-spacing:0.158px;">{m_radius=7.00000000 m_pointCount=30 }</div>
<div class="t" id="t43" style="left:308px;top:742.07px;font-family:'Liberation Sans', sans-serif;font-size:14.5px;line-height:17.4px;color:#1e1e1e;letter-spacing:-0.512px;">10.0000000</div>
<div class="t" id="t45" style="left:308px;top:763.67px;font-family:'Liberation Sans', sans-serif;font-size:14.5px;line-height:17.4px;color:#1e1e1e;letter-spacing:0.215px;">false</div>
<div class="t" id="t47" style="left:308px;top:785.27px;font-family:'Liberation Sans', sans-serif;font-size:14.5px;line-height:17.4px;color:#1e1e1e;letter-spacing:0.339px;">{m_string={m_string={...} } m_font=0x00fd</div>
</div>
<div style="position:absolute;left:0;top:0;width:1480px;height:987px;clip-path:inset(176px 0px 177px 586px);">
<div class="t" id="t48" style="left:594px;top:177.80px;font-family:'Liberation Sans', sans-serif;font-size:15px;line-height:18.0px;color:#1e1e1e;letter-spacing:-0.591px;">File</div>
<div class="t" id="t49" style="left:632px;top:177.80px;font-family:'Liberation Sans', sans-serif;font-size:15px;line-height:18.0px;color:#1e1e1e;letter-spacing:-0.286px;">Edit</div>
<div class="t" id="t50" style="left:673.6px;top:177.80px;font-family:'Liberation Sans', sans-serif;font-size:15px;line-height:18.0px;color:#1e1e1e;letter-spacing:-0.165px;">Selection</div>
<div class="t" id="t51" style="left:750px;top:177.80px;font-family:'Liberation Sans', sans-serif;font-size:15px;line-height:18.0px;color:#1e1e1e;letter-spacing:-0.083px;">View</div>
<div class="t" id="t52" style="left:798px;top:177.80px;font-family:'Liberation Sans', sans-serif;font-size:15px;line-height:18.0px;color:#1e1e1e;letter-spacing:-1.016px;">Go</div>
<div class="t" id="t53" style="left:834px;top:177.80px;font-family:'Liberation Sans', sans-serif;font-size:15px;line-height:18.0px;color:#1e1e1e;letter-spacing:-0.051px;">Debug</div>
<div class="t" id="t54" style="left:893px;top:177.80px;font-family:'Liberation Sans', sans-serif;font-size:15px;line-height:18.0px;color:#1e1e1e;letter-spacing:-0.836px;">Tasks</div>
<div class="t" id="t55" style="left:944px;top:177.80px;font-family:'Liberation Sans', sans-serif;font-size:15px;line-height:18.0px;color:#1e1e1e;letter-spacing:0.047px;">Help</div>
<div class="t" id="t56" style="left:674.5px;top:215.09px;font-family:'Liberation Sans', sans-serif;font-size:13px;line-height:15.6px;color:#bbbbbb;letter-spacing:-0.559px;">DEBUG</div>
<div class="t" id="t57" style="left:757.6px;top:213.33px;font-family:'Liberation Sans', sans-serif;font-size:15.5px;line-height:18.6px;color:#ffffff;letter-spacing:0.714px;">No Configurations</div>
<div class="t" id="t58" style="left:674.5px;top:249.47px;font-family:'Liberation Sans', sans-serif;font-size:13.5px;line-height:16.2px;color:#cccccc;font-weight:bold;letter-spacing:-0.502px;">VARIABLES</div>
<div class="t" id="t59" style="left:674.6px;top:275.60px;font-family:'Liberation Sans', sans-serif;font-size:15px;line-height:18.0px;color:#cccccc;letter-spacing:-0.472px;">Locals</div>
<div class="t" id="t72" style="left:674.5px;top:458.97px;font-family:'Liberation Sans', sans-serif;font-size:13.5px;line-height:16.2px;color:#cccccc;font-weight:bold;">WATCH</div>
<div class="t" id="t73" style="left:674.5px;top:486.47px;font-family:'Liberation Sans', sans-serif;font-size:13.5px;line-height:16.2px;color:#cccccc;font-weight:bold;letter-spacing:-0.722px;">CALL STACK</div>
<div class="t" id="t74" style="left:674.6px;top:512.83px;font-family:'Liberation Sans', sans-serif;font-size:15.5px;line-height:18.6px;color:#cccccc;letter-spacing:0.427px;">Main Thread</div>
<div class="t" id="t75" style="left:862px;top:517.59px;font-family:'Liberation Sans', sans-serif;font-size:11px;line-height:13.2px;color:#cccccc;letter-spacing:0.582px;">PAUSED ON BREAKPOINT</div>
<div class="t" id="t76" style="left:690px;top:542.09px;font-family:'Liberation Mono', monospace;font-size:14.9px;line-height:17.88px;color:#cccccc;font-weight:bold;">main()</div>
<div class="t" id="t77" style="left:891px;top:540.83px;font-family:'Liberation Sans', sans-serif;font-size:15.5px;line-height:18.6px;color:#cccccc;letter-spacing:0.746px;">pong.cpp</div>
<div class="t" id="t78" style="left:976px;top:541.75px;font-family:'Liberation Sans', sans-serif;font-size:14px;line-height:16.8px;color:#333333;letter-spacing:-0.512px;">162:1</div>
<div class="t" id="t79" style="left:690px;top:570.09px;font-family:'Liberation Mono', monospace;font-size:14.9px;line-height:17.88px;color:#6e6e6e;">[External Code]</div>
<div class="t" id="t80" style="left:864px;top:568.33px;font-family:'Liberation Sans', sans-serif;font-size:15.5px;line-height:18.6px;color:#6e6e6e;letter-spacing:0.381px;">Unknown Source</div>
<div class="t" id="t81" style="left:1001.5px;top:570.22px;font-family:'Liberation Sans', sans-serif;font-size:13.5px;line-height:16.2px;color:#6e6e6e;">0</div>
<div class="t" id="t83" style="left:674.6px;top:623.73px;font-family:'Liberation Sans', sans-serif;font-size:15.5px;line-height:18.6px;color:#cccccc;letter-spacing:0.566px;">ntdll.dll thread</div>
<div class="t" id="t84" style="left:965px;top:627.89px;font-family:'Liberation Sans', sans-serif;font-size:11px;line-height:13.2px;color:#cccccc;letter-spacing:0.316px;">PAUSED</div>
<div class="t" id="t85" style="left:674.6px;top:651.33px;font-family:'Liberation Sans', sans-serif;font-size:15.5px;line-height:18.6px;color:#cccccc;letter-spacing:0.566px;">ntdll.dll thread</div>
<div class="t" id="t86" style="left:965px;top:655.49px;font-family:'Liberation Sans', sans-serif;font-size:11px;line-height:13.2px;color:#cccccc;letter-spacing:0.316px;">PAUSED</div>
<div class="t" id="t87" style="left:674.6px;top:678.93px;font-family:'Liberation Sans', sans-serif;font-size:15.5px;line-height:18.6px;color:#cccccc;letter-spacing:0.566px;">ntdll.dll thread</div>
<div class="t" id="t88" style="left:965px;top:683.09px;font-family:'Liberation Sans', sans-serif;font-size:11px;line-height:13.2px;color:#cccccc;letter-spacing:0.316px;">PAUSED</div>
<div class="t" id="t89" style="left:674.6px;top:706.53px;font-family:'Liberation Sans', sans-serif;font-size:15.5px;line-height:18.6px;color:#cccccc;letter-spacing:0.566px;">ntdll.dll thread</div>
<div class="t" id="t90" style="left:965px;top:710.69px;font-family:'Liberation Sans', sans-serif;font-size:11px;line-height:13.2px;color:#cccccc;letter-spacing:0.316px;">PAUSED</div>
<div class="t" id="t91" style="left:674.6px;top:734.13px;font-family:'Liberation Sans', sans-serif;font-size:15.5px;line-height:18.6px;color:#cccccc;letter-spacing:0.427px;">ig9icd32.dll thread</div>
<div class="t" id="t92" style="left:965px;top:738.29px;font-family:'Liberation Sans', sans-serif;font-size:11px;line-height:13.2px;color:#cccccc;letter-spacing:0.316px;">PAUSED</div>
<div class="t" id="t93" style="left:674.5px;top:760.72px;font-family:'Liberation Sans', sans-serif;font-size:13.5px;line-height:16.2px;color:#cccccc;font-weight:bold;letter-spacing:-0.377px;">BREAKPOINTS</div>
<div class="t" id="t94" style="left:701px;top:786.33px;font-family:'Liberation Sans', sans-serif;font-size:15.5px;line-height:18.6px;color:#cccccc;letter-spacing:0.603px;">pong.cpp</div>
<div class="t" id="t95" style="left:784px;top:786.80px;font-family:'Liberation Sans', sans-serif;font-size:15px;line-height:18.0px;color:#8a8a8a;">\</div>
<div class="t" id="t96" style="left:988px;top:788.22px;font-family:'Liberation Sans', sans-serif;font-size:13.5px;line-height:16.2px;color:#cccccc;letter-spacing:0.234px;">162</div>
<div class="t" id="t97" style="left:1068.6px;top:213.53px;font-family:'Liberation Sans', sans-serif;font-size:15.5px;line-height:18.6px;color:#ffffff;letter-spacing:0.888px;">pong.cpp</div>
<div class="t" id="t154" style="left:1052.4px;top:690.72px;font-family:'Liberation Sans', sans-serif;font-size:13.5px;line-height:16.2px;color:#8f8f8f;letter-spacing:-0.990px;">PROBLEMS</div>
<div class="t" id="t155" style="left:1145.8px;top:690.72px;font-family:'Liberation Sans', sans-serif;font-size:13.5px;line-height:16.2px;color:#8f8f8f;letter-spacing:-0.860px;">OUTPUT</div>
<div class="t" id="t156" style="left:1222.6px;top:690.72px;font-family:'Liberation Sans', sans-serif;font-size:13.5px;line-height:16.2px;color:#e7e7e7;letter-spacing:-0.865px;">DEBUG CONSOLE</div>
<div class="t" id="t157" style="left:1355px;top:690.72px;font-family:'Liberation Sans', sans-serif;font-size:13.5px;line-height:16.2px;color:#8f8f8f;letter-spacing:-0.467px;">TERMINAL</div>
</div>
<div style="position:absolute;left:0;top:0;width:1480px;height:987px;clip-path:inset(271px 452px 534px 649px);">
<div class="t" id="t60" style="left:690px;top:305.09px;font-family:'Liberation Mono', monospace;font-size:14.9px;line-height:17.88px;color:#c586c0;">AITime:</div>
<div class="t" id="t61" style="left:761.52px;top:305.09px;font-family:'Liberation Mono', monospace;font-size:14.9px;line-height:17.88px;color:#cccccc;">{m_microseconds=100000 }</div>
<div class="t" id="t62" style="left:690px;top:332.69px;font-family:'Liberation Mono', monospace;font-size:14.9px;line-height:17.88px;color:#c586c0;">AITimer:</div>
<div class="t" id="t63" style="left:770.46px;top:332.69px;font-family:'Liberation Mono', monospace;font-size:14.9px;line-height:17.88px;color:#cccccc;">{m_startTime={m_microsecond…</div>
<div class="t" id="t64" style="left:690px;top:360.29px;font-family:'Liberation Mono', monospace;font-size:14.9px;line-height:17.88px;color:#c586c0;">ball:</div>
<div class="t" id="t65" style="left:743.64px;top:360.29px;font-family:'Liberation Mono', monospace;font-size:14.9px;line-height:17.88px;color:#cccccc;">{m_radius=7.00000000 m_pointCo…</div>
<div class="t" id="t66" style="left:690px;top:387.89px;font-family:'Liberation Mono', monospace;font-size:14.9px;line-height:17.88px;color:#c586c0;">ballAngle:</div>
<div class="t" id="t67" style="left:788.34px;top:387.89px;font-family:'Liberation Mono', monospace;font-size:14.9px;line-height:17.88px;color:#b5cea8;">2.94960403</div>
<div class="t" id="t68" style="left:690px;top:415.49px;font-family:'Liberation Mono', monospace;font-size:14.9px;line-height:17.88px;color:#c586c0;">ballRadius:</div>
<div class="t" id="t69" style="left:797.28px;top:415.49px;font-family:'Liberation Mono', monospace;font-size:14.9px;line-height:17.88px;color:#b5cea8;">10.0000000</div>
<div class="t" id="t70" style="left:690px;top:443.09px;font-family:'Liberation Mono', monospace;font-size:14.9px;line-height:17.88px;color:#c586c0;">ballSpeed:</div>
<div class="t" id="t71" style="left:788.34px;top:443.09px;font-family:'Liberation Mono', monospace;font-size:14.9px;line-height:17.88px;color:#b5cea8;">400.000000</div>
</div>
<div style="position:absolute;left:0;top:0;width:1480px;height:987px;clip-path:inset(590px 461px 367px 649px);">
<div class="t" id="t82" style="left:690px;top:597.59px;font-family:'Liberation Mono', monospace;font-size:14.9px;line-height:17.88px;color:#6e6e6e;">[Frames below may be incorrect and/or</div>
</div>
<div style="position:absolute;left:0;top:0;width:1480px;height:987px;clip-path:inset(243px 0px 313px 1028px);">
<div class="t" id="t98" style="left:1051.5px;top:246.94px;font-family:'Liberation Mono', monospace;font-size:16px;line-height:19.2px;color:#858585;">153</div>
<div class="t" id="t99" style="left:1051.5px;top:270.88px;font-family:'Liberation Mono', monospace;font-size:16px;line-height:19.2px;color:#858585;">154</div>
<div class="t" id="t100" style="left:1229.8px;top:270.80px;font-family:'Liberation Mono', monospace;font-size:16.1px;line-height:19.32px;color:#608b4e;">// Move the ball</div>
<div class="t" id="t101" style="left:1051.5px;top:294.82px;font-family:'Liberation Mono', monospace;font-size:16px;line-height:19.2px;color:#858585;">155</div>
<div class="t" id="t102" style="left:1229.8px;top:294.74px;font-family:'Liberation Mono', monospace;font-size:16.1px;line-height:19.32px;color:#569cd6;">float</div>
<div class="t" id="t103" style="left:1278.1px;top:294.74px;font-family:'Liberation Mono', monospace;font-size:16.1px;line-height:19.32px;color:#d4d4d4;"> factor = ballSpeed * deltaTime;</div>
<div class="t" id="t104" style="left:1051.5px;top:318.76px;font-family:'Liberation Mono', monospace;font-size:16px;line-height:19.2px;color:#858585;">156</div>
<div class="t" id="t105" style="left:1229.8px;top:318.68px;font-family:'Liberation Mono', monospace;font-size:16.1px;line-height:19.32px;color:#d4d4d4;">ball.</div>
<div class="t" id="t106" style="left:1278.1px;top:318.68px;font-family:'Liberation Mono', monospace;font-size:16.1px;line-height:19.32px;color:#dcdcaa;">move</div>
<div class="t" id="t107" style="left:1316.74px;top:318.68px;font-family:'Liberation Mono', monospace;font-size:16.1px;line-height:19.32px;color:#d4d4d4;">(std::</div>
<div class="t" id="t108" style="left:1374.7px;top:318.68px;font-family:'Liberation Mono', monospace;font-size:16.1px;line-height:19.32px;color:#dcdcaa;">cos</div>
<div class="t" id="t109" style="left:1403.68px;top:318.68px;font-family:'Liberation Mono', monospace;font-size:16.1px;line-height:19.32px;color:#d4d4d4;">(ballAngle) * factor, std::sin(ballAngle) * factor);</div>
<div class="t" id="t110" style="left:1051.5px;top:342.70px;font-family:'Liberation Mono', monospace;font-size:16px;line-height:19.2px;color:#858585;">157</div>
<div class="t" id="t111" style="left:1051.5px;top:366.64px;font-family:'Liberation Mono', monospace;font-size:16px;line-height:19.2px;color:#858585;">158</div>
<div class="t" id="t112" style="left:1229.8px;top:366.56px;font-family:'Liberation Mono', monospace;font-size:16.1px;line-height:19.32px;color:#608b4e;">// Check collisions between the ball and the screen</div>
<div class="t" id="t113" style="left:1051.5px;top:390.58px;font-family:'Liberation Mono', monospace;font-size:16px;line-height:19.2px;color:#858585;">159</div>
<div class="t" id="t114" style="left:1229.8px;top:390.50px;font-family:'Liberation Mono', monospace;font-size:16.1px;line-height:19.32px;color:#c586c0;">if</div>
<div class="t" id="t115" style="left:1249.12px;top:390.50px;font-family:'Liberation Mono', monospace;font-size:16.1px;line-height:19.32px;color:#d4d4d4;"> (ball.</div>
<div class="t" id="t116" style="left:1316.7399999999998px;top:390.50px;font-family:'Liberation Mono', monospace;font-size:16.1px;line-height:19.32px;color:#dcdcaa;">getPosition</div>
<div class="t" id="t117" style="left:1422.9999999999998px;top:390.50px;font-family:'Liberation Mono', monospace;font-size:16.1px;line-height:19.32px;color:#d4d4d4;">().x - ballRadius &lt; 0.f)</div>
<div class="t" id="t118" style="left:1051.5px;top:414.52px;font-family:'Liberation Mono', monospace;font-size:16px;line-height:19.2px;color:#858585;">160</div>
<div class="t" id="t119" style="left:1229.8px;top:414.44px;font-family:'Liberation Mono', monospace;font-size:16.1px;line-height:19.32px;color:#d4d4d4;">{</div>
<div class="t" id="t120" style="left:1051.5px;top:438.46px;font-family:'Liberation Mono', monospace;font-size:16px;line-height:19.2px;color:#858585;">161</div>
<div class="t" id="t121" style="left:1229.8px;top:438.38px;font-family:'Liberation Mono', monospace;font-size:16.1px;line-height:19.32px;color:#d4d4d4;">    isPlaying = </div>
<div class="t" id="t122" style="left:1384.36px;top:438.38px;font-family:'Liberation Mono', monospace;font-size:16.1px;line-height:19.32px;color:#569cd6;">false</div>
<div class="t" id="t123" style="left:1432.6599999999999px;top:438.38px;font-family:'Liberation Mono', monospace;font-size:16.1px;line-height:19.32px;color:#d4d4d4;">;</div>
<div class="t" id="t124" style="left:1051.5px;top:462.40px;font-family:'Liberation Mono', monospace;font-size:16px;line-height:19.2px;color:#c6c6c6;">162</div>
<div class="t" id="t125" style="left:1229.8px;top:462.32px;font-family:'Liberation Mono', monospace;font-size:16.1px;line-height:19.32px;color:#d4d4d4;">    pauseMessage.</div>
<div class="t" id="t126" style="left:1394.02px;top:462.32px;font-family:'Liberation Mono', monospace;font-size:16.1px;line-height:19.32px;color:#dcdcaa;">setString</div>
<div class="t" id="t127" style="left:1480.96px;top:462.32px;font-family:'Liberation Mono', monospace;font-size:16.1px;line-height:19.32px;color:#d4d4d4;">("You lost!");</div>
<div class="t" id="t128" style="left:1051.5px;top:486.34px;font-family:'Liberation Mono', monospace;font-size:16px;line-height:19.2px;color:#858585;">163</div>
<div class="t" id="t129" style="left:1229.8px;top:486.26px;font-family:'Liberation Mono', monospace;font-size:16.1px;line-height:19.32px;color:#d4d4d4;">}</div>
<div class="t" id="t130" style="left:1051.5px;top:510.28px;font-family:'Liberation Mono', monospace;font-size:16px;line-height:19.2px;color:#858585;">164</div>
<div class="t" id="t131" style="left:1229.8px;top:510.20px;font-family:'Liberation Mono', monospace;font-size:16.1px;line-height:19.32px;color:#c586c0;">if</div>
<div class="t" id="t132" style="left:1249.12px;top:510.20px;font-family:'Liberation Mono', monospace;font-size:16.1px;line-height:19.32px;color:#d4d4d4;"> (ball.</div>
<div class="t" id="t133" style="left:1316.7399999999998px;top:510.20px;font-family:'Liberation Mono', monospace;font-size:16.1px;line-height:19.32px;color:#dcdcaa;">getPosition</div>
<div class="t" id="t134" style="left:1422.9999999999998px;top:510.20px;font-family:'Liberation Mono', monospace;font-size:16.1px;line-height:19.32px;color:#d4d4d4;">().x + ballRadius &gt; gameWidth)</div>
<div class="t" id="t135" style="left:1051.5px;top:534.22px;font-family:'Liberation Mono', monospace;font-size:16px;line-height:19.2px;color:#858585;">165</div>
<div class="t" id="t136" style="left:1229.8px;top:534.14px;font-family:'Liberation Mono', monospace;font-size:16.1px;line-height:19.32px;color:#d4d4d4;">{</div>
<div class="t" id="t137" style="left:1051.5px;top:558.16px;font-family:'Liberation Mono', monospace;font-size:16px;line-height:19.2px;color:#858585;">166</div>
<div class="t" id="t138" style="left:1229.8px;top:558.08px;font-family:'Liberation Mono', monospace;font-size:16.1px;line-height:19.32px;color:#d4d4d4;">    isPlaying = </div>
<div class="t" id="t139" style="left:1384.36px;top:558.08px;font-family:'Liberation Mono', monospace;font-size:16.1px;line-height:19.32px;color:#569cd6;">false</div>
<div class="t" id="t140" style="left:1432.6599999999999px;top:558.08px;font-family:'Liberation Mono', monospace;font-size:16.1px;line-height:19.32px;color:#d4d4d4;">;</div>
<div class="t" id="t141" style="left:1051.5px;top:582.10px;font-family:'Liberation Mono', monospace;font-size:16px;line-height:19.2px;color:#858585;">167</div>
<div class="t" id="t142" style="left:1229.8px;top:582.02px;font-family:'Liberation Mono', monospace;font-size:16.1px;line-height:19.32px;color:#d4d4d4;">    pauseMessage.</div>
<div class="t" id="t143" style="left:1394.02px;top:582.02px;font-family:'Liberation Mono', monospace;font-size:16.1px;line-height:19.32px;color:#dcdcaa;">setString</div>
<div class="t" id="t144" style="left:1480.96px;top:582.02px;font-family:'Liberation Mono', monospace;font-size:16.1px;line-height:19.32px;color:#d4d4d4;">("You won!");</div>
<div class="t" id="t145" style="left:1051.5px;top:606.04px;font-family:'Liberation Mono', monospace;font-size:16px;line-height:19.2px;color:#858585;">168</div>
<div class="t" id="t146" style="left:1229.8px;top:605.96px;font-family:'Liberation Mono', monospace;font-size:16.1px;line-height:19.32px;color:#d4d4d4;">}</div>
<div class="t" id="t147" style="left:1051.5px;top:629.98px;font-family:'Liberation Mono', monospace;font-size:16px;line-height:19.2px;color:#858585;">169</div>
<div class="t" id="t148" style="left:1229.8px;top:629.90px;font-family:'Liberation Mono', monospace;font-size:16.1px;line-height:19.32px;color:#c586c0;">if</div>
<div class="t" id="t149" style="left:1249.12px;top:629.90px;font-family:'Liberation Mono', monospace;font-size:16.1px;line-height:19.32px;color:#d4d4d4;"> (ball.</div>
<div class="t" id="t150" style="left:1316.7399999999998px;top:629.90px;font-family:'Liberation Mono', monospace;font-size:16.1px;line-height:19.32px;color:#dcdcaa;">getPosition</div>
<div class="t" id="t151" style="left:1422.9999999999998px;top:629.90px;font-family:'Liberation Mono', monospace;font-size:16.1px;line-height:19.32px;color:#d4d4d4;">().y - ballRadius &lt; 0.f)</div>
<div class="t" id="t152" style="left:1051.5px;top:653.92px;font-family:'Liberation Mono', monospace;font-size:16px;line-height:19.2px;color:#858585;">170</div>
<div class="t" id="t153" style="left:1229.8px;top:653.84px;font-family:'Liberation Mono', monospace;font-size:16.1px;line-height:19.32px;color:#d4d4d4;">{</div>
</div>
</body></html>
